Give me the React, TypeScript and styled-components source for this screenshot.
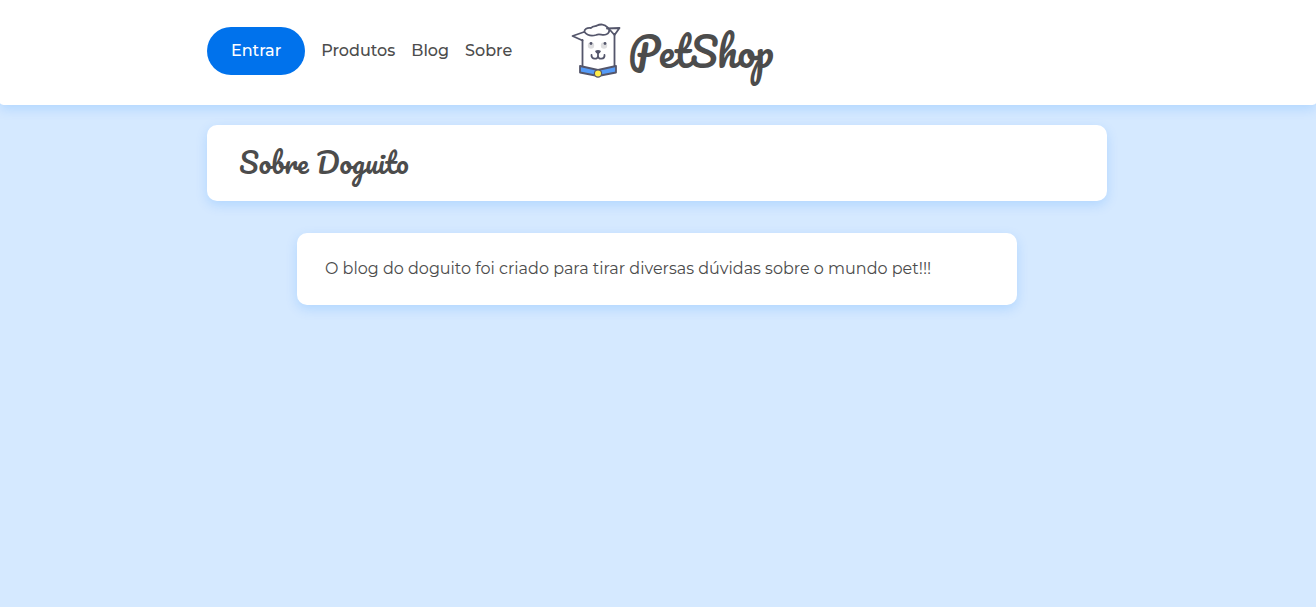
import React from "react";
import styled, { createGlobalStyle } from "styled-components";

const GlobalStyle = createGlobalStyle`
  *, *::before, *::after { box-sizing: border-box; }
  body {
    margin: 0;
    background: #d5e9ff;
    color: #4c4c4c;
    font-family: Montserrat, Inter, sans-serif;
    font-size: 16px;
    line-height: 24px;
  }
`;

const Header = styled.header`
  background: #fff;
  border-radius: 0 0 6px 6px / 0 0 2px 2px;
  box-shadow: 0 4px 12px rgba(0, 123, 255, 0.17);
  padding: 0 16px;
`;

const HeaderContent = styled.div`
  display: flex;
  align-items: center;
  gap: 59px;
  max-width: 902px;
  min-height: 105px;
  margin: 0 auto;
  padding-right: 2px;
  padding-bottom: 3px;
`;

const Nav = styled.nav`
  display: flex;
  align-items: center;
  gap: 16px;
`;

const LoginButton = styled.button`
  height: 48px;
  padding: 0 24px;
  border: 0;
  border-radius: 24px;
  background: #0072ec;
  color: #fff;
  font: inherit;
  font-weight: 500;
  cursor: pointer;
`;

const NavLink = styled.a`
  color: inherit;
  font-weight: 500;
  text-decoration: none;
`;

const Brand = styled.a`
  display: flex;
  align-items: center;
  gap: 7px;
  color: inherit;
  text-decoration: none;
`;

const BrandName = styled.span`
  font: 400 40px/56px Pacifico, Lato, sans-serif;
`;

const Main = styled.main`
  display: grid;
  gap: 32px;
  max-width: 902px;
  margin: 20px auto;
  padding-right: 2px;
`;

const Card = styled.section`
  background: #fff;
  border-radius: 10px;
  box-shadow: 0 4px 12px rgba(0, 123, 255, 0.17);
`;

const TitleCard = styled(Card)`
  padding: 18px 32px;
`;

const Title = styled.h1`
  margin: 0;
  font: 400 28px/40px Pacifico, Lato, sans-serif;
`;

const TextCard = styled(Card)`
  width: 80%;
  justify-self: center;
  padding: 24px 28px;
`;

const Text = styled.p`
  margin: 0;
  font-weight: 400;
`;

function DogLogo() {
  return (
    <svg width="50" height="56" viewBox="0 0 50 56" fill="none" stroke="#54566b" strokeWidth="1.8" strokeLinejoin="round" strokeLinecap="round" aria-hidden="true">
      <path d="M11.5 17V43M43.500 11V43" />
      <path d="M13 9L1.500 13L11.500 17.500" />
      <path d="M13.500 9C13 6 16 4.500 20 5C22 2.500 25 3.500 26 2.500C29 1 34 1 36 4L38 6M13.500 9C16 12 20 13.500 25 12C29 10 31 13 35 11.500C38 10.500 38.500 8 38 6" />
      <path d="M36 5.500L48.500 5L43.500 12L39 7" />
      <g stroke="none">
        <circle cx="20" cy="22.500" r="3.200" fill="#dddddf" />
        <circle cx="33" cy="22.500" r="3.200" fill="#dddddf" />
        <circle cx="20" cy="20.500" r="1.400" fill="#54566b" />
        <circle cx="34" cy="20.500" r="1.400" fill="#54566b" />
        <path d="M24 28Q27 26 30 28Q29 31 27 31Q25 31 24 28Z" fill="#54566b" />
      </g>
      <path d="M27 30V33M20.500 32C20 36.500 27 37 27 33C27 37 34 36.500 33.500 32" />
      <path d="M9 43L27 47L45 43V49.500L27 53L9 49.500Z" fill="#559bf7" />
      <circle cx="27" cy="50.500" r="3.600" fill="#ffed4a" strokeWidth="1.200" />
    </svg>
  );
}

export default function App() {
  return (
    <>
      <GlobalStyle />
      <Header>
        <HeaderContent>
          <Nav>
            <LoginButton type="button">Entrar</LoginButton>
            <NavLink href="#produtos">Produtos</NavLink>
            <NavLink href="#blog">Blog</NavLink>
            <NavLink href="#sobre">Sobre</NavLink>
          </Nav>
          <Brand href="#inicio">
            <DogLogo />
            <BrandName>PetShop</BrandName>
          </Brand>
        </HeaderContent>
      </Header>
      <Main>
        <TitleCard>
          <Title>Sobre Doguito</Title>
        </TitleCard>
        <TextCard>
          <Text>O blog do doguito foi criado para tirar diversas dúvidas sobre o mundo pet!!!</Text>
        </TextCard>
      </Main>
    </>
  );
}
